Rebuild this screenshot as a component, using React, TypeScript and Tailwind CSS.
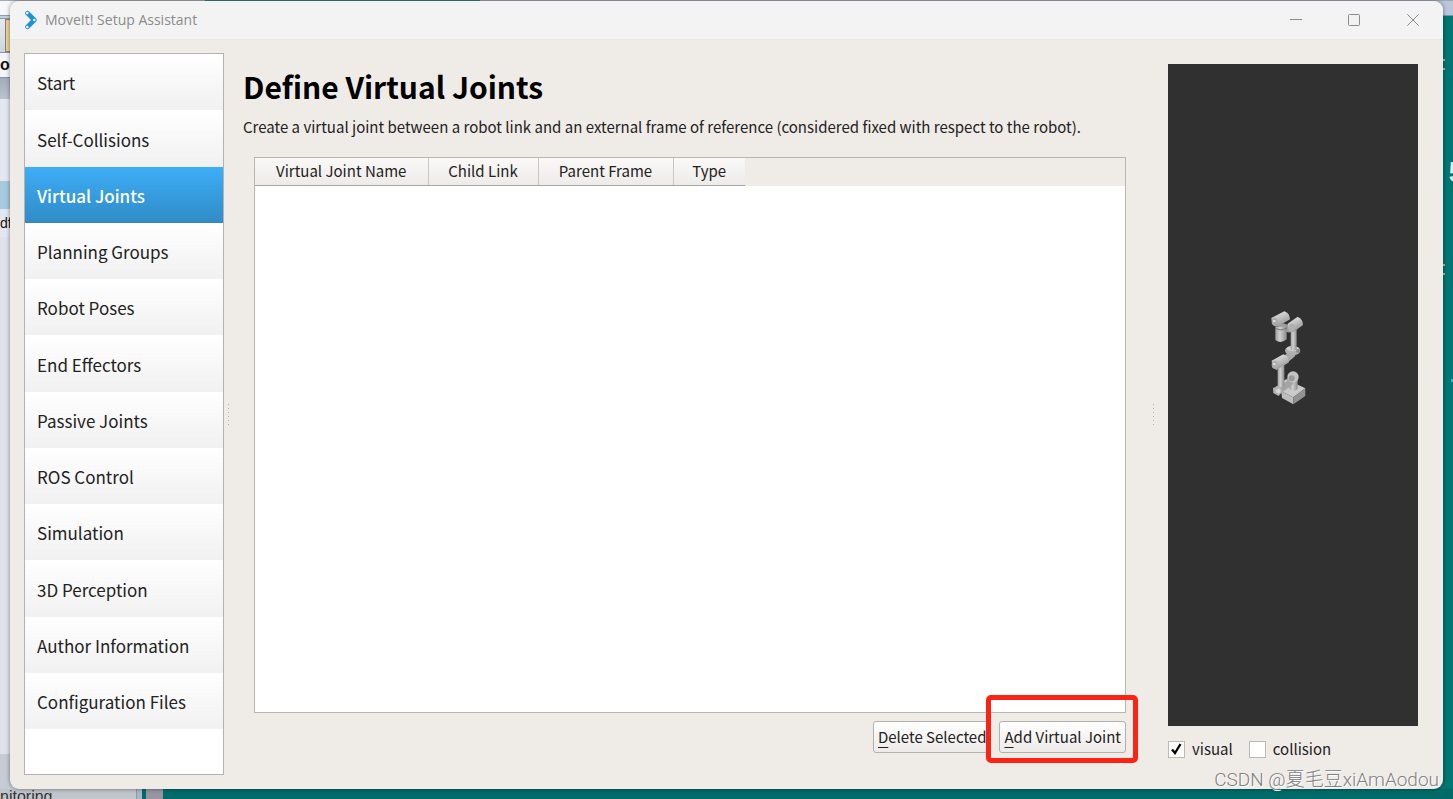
import { clsx } from 'clsx';

const STEPS = [
  'Start',
  'Self-Collisions',
  'Virtual Joints',
  'Planning Groups',
  'Robot Poses',
  'End Effectors',
  'Passive Joints',
  'ROS Control',
  'Simulation',
  '3D Perception',
  'Author Information',
  'Configuration Files',
];

const COLUMNS = [
  { label: 'Virtual Joint Name', width: 'w-[173px]' },
  { label: 'Child Link', width: 'w-[110px]' },
  { label: 'Parent Frame', width: 'w-[135px]' },
  { label: 'Type', width: 'w-[72px]' },
];

// Other windows that peek out around the dialog
function Desktop() {
  return (
    <div className="absolute inset-0 flex flex-col overflow-hidden bg-[#007672]" aria-hidden="true">
      <div className="flex h-px">
        <div className="w-[205px] bg-[#a5a6b0]" />
        <div className="w-[275px] bg-[#347f7d]" />
        <div className="flex-1 bg-[#a0a6b2]" />
      </div>
      <div className="flex min-h-0 flex-1 justify-between">
        <div className="flex w-10 flex-col whitespace-nowrap bg-[#e3e7f1] text-[#111]">
          <div className="h-[14px] bg-[#f7f8fa]" />
          <div className="h-[4px] border-y border-[#8c9db0] bg-[#c3d0de]" />
          <div className="flex h-[33px] bg-gradient-to-b from-[#e4eaf3] to-[#cbd5e3]">
            <div className="ml-[5px] w-8 border border-[#a07c4c] bg-[#e5d3a0]" />
          </div>
          <div className="flex h-[26px] items-center border-y border-[#8593a8] bg-[#f3f5f9] font-['Liberation_Sans'] text-base font-bold">
            o
          </div>
          <div className="h-[21px] bg-gradient-to-b from-[#a3adbb] to-[#bac3ce]" />
          <div className="h-[82px]" />
          <div className="h-[28px] bg-[#a7c9dd]" />
          <div className="h-[28px] pt-[2px] font-['Liberation_Sans'] text-sm leading-6">df</div>
          <div className="flex-1 bg-[#dfe1ec]" />
          <div className="h-[35px] bg-[#c5ccd5]" />
        </div>
        <div className="flex w-5 flex-col pl-[10px]">
          <div className="-ml-[10px] h-[15px] border-b border-[#7d93a5] bg-[#b9c6dc]" />
          <div className="mt-[43px] h-[11px] w-[2px] border-y-2 border-[#b9c0a4]" />
          <div className="mt-[88px] h-8 pl-[5px] font-['Liberation_Mono'] text-3xl leading-8 font-bold text-[#e4efe9]">
            5
          </div>
          <div className="mt-[74px] h-[11px] w-[2px] border-y-2 border-[#b9c0a4]" />
          <div className="mt-[104px] ml-[8px] h-[3px] bg-[#3ba8d8]" />
        </div>
      </div>
      <div className="flex h-[10px] bg-[#006b69]">
        <div className="w-[137px] overflow-hidden border-r border-[#8d99a6] bg-[#c0c5cc] font-['Liberation_Sans'] text-base leading-4 text-[#333]">
          nitoring
        </div>
        <div className="w-[5px] bg-[#a9b7c6]" />
        <div className="ml-[4px] w-[17px] bg-[#9795a1]" />
      </div>
    </div>
  );
}

function MoveItLogo() {
  return (
    <svg className="h-5 w-[14px]" viewBox="0 0 14 20" fill="none">
      <path d="M3.5 3.2 L10.3 10 L3.5 16.8" stroke="#1f93cf" strokeWidth="4.6" strokeLinejoin="round" strokeLinecap="round" />
      <circle cx="3.3" cy="3" r="1.2" fill="#fff" />
      <circle cx="10.3" cy="10" r="1.2" fill="#fff" />
      <circle cx="3.3" cy="17" r="1.2" fill="#fff" />
    </svg>
  );
}

function TitleBar() {
  return (
    <header className="flex h-[39px] shrink-0 items-center border-b border-[#e9e7e5] bg-[#f3f3f3] pl-[14px] text-[#8b8b8b]">
      <MoveItLogo />
      <span className="ml-[7px] flex-1 font-['Open_Sans',sans-serif] text-sm">MoveIt! Setup Assistant</span>
      <button type="button" aria-label="Minimize" className="flex h-full w-[58px] items-center justify-center">
        <svg className="size-3" viewBox="0 0 12 12" stroke="currentColor"><path d="M0 5.5H12" /></svg>
      </button>
      <button type="button" aria-label="Maximize" className="flex h-full w-[58px] items-center justify-center">
        <svg className="size-3" viewBox="0 0 12 12" fill="none" stroke="currentColor"><rect x="0.5" y="0.5" width="11" height="11" rx="1" /></svg>
      </button>
      <button type="button" aria-label="Close" className="flex h-full w-[60px] items-center justify-center">
        <svg className="size-3" viewBox="0 0 12 12" stroke="currentColor"><path d="M0.3 0.3L11.7 11.7M11.7 0.3L0.3 11.7" /></svg>
      </button>
    </header>
  );
}

function Sidebar() {
  return (
    <nav className="w-[200px] shrink-0 border border-[#b5b2af] bg-white">
      <ul className="grid h-[675px] grid-rows-12">
        {STEPS.map((step) => {
          const active = step === 'Virtual Joints';
          return (
            <li key={step} className="flex">
              <button
                type="button"
                className={clsx(
                  'flex-1 border-b pt-[3px] pl-3 text-left text-[17px]',
                  active
                    ? 'border-[#3b86b8] bg-gradient-to-b from-[#3daef8] to-[#308cc6] font-medium text-white'
                    : 'border-[#ebe9e6] bg-gradient-to-b from-white to-[#f1f1f1] text-[#222] last:border-[#f1f1f1]'
                )}
              >
                {step}
              </button>
            </li>
          );
        })}
      </ul>
    </nav>
  );
}

function SplitHandle() {
  return (
    <div className="flex w-[9px] shrink-0 flex-col items-center justify-center gap-[3px]">
      {[0, 1, 2, 3, 4, 5].map((dot) => (
        <span key={dot} className="size-px bg-[#b4b1ad]" />
      ))}
    </div>
  );
}

const pushButton =
  'h-8 rounded-[3px] border border-[#b3b0ad] bg-gradient-to-b from-white to-[#edebe8] px-1 text-[15px] text-[#222]';

function JointsPanel() {
  return (
    <main className="flex min-w-0 flex-1 flex-col pr-[23px] pl-[10px]">
      <h1 className="mt-[13px] text-3xl leading-10 font-bold text-black">Define Virtual Joints</h1>
      <p className="mt-[9px] text-[15px] leading-6">
        Create a virtual joint between a robot link and an external frame of reference (considered fixed with respect to the robot).
      </p>
      <div className="mt-[18px] ml-[11px] flex-1 border border-[#b9b6b3] bg-white">
        <div className="bg-[#efebe7]">
          <table className="table-fixed border-collapse" aria-label="Virtual joints">
            <thead>
              <tr className="h-[27px]">
                {COLUMNS.map((col) => (
                  <th
                    key={col.label}
                    className={clsx(
                      'border-b border-[#a9a6a3] bg-gradient-to-b from-[#fbf9f8] to-[#edebe9] p-0 text-[15px] leading-6 font-normal not-last:border-r not-last:border-r-[#c9c6c3]',
                      col.width
                    )}
                  >
                    {col.label}
                  </th>
                ))}
              </tr>
            </thead>
          </table>
        </div>
      </div>
      <div className="mt-2 mb-[22px] flex justify-end gap-2">
        <button type="button" className={pushButton}>
          <span className="underline underline-offset-4">D</span>elete Selected
        </button>
        <div className="relative">
          <button type="button" className={pushButton}>
            <span className="underline underline-offset-4">A</span>dd Virtual Joint
          </button>
          <div className="pointer-events-none absolute -top-[26px] -right-3 -bottom-[10px] -left-[13px] rounded-[5px] border-5 border-[#fd2314]" />
        </div>
      </div>
    </main>
  );
}

function RobotArm() {
  return (
    <svg className="h-[96px] w-[38px]" viewBox="60 30 114 288" strokeLinecap="round" aria-label="Robot arm">
      <defs>
        <linearGradient id="tube" x1="0" x2="1">
          <stop offset="0" stopColor="#a0a0a0" />
          <stop offset="0.4" stopColor="#d0d0d0" />
          <stop offset="1" stopColor="#8c8c8c" />
        </linearGradient>
        <linearGradient id="motor" x1="0" y1="0" x2="0.5" y2="1">
          <stop offset="0.2" stopColor="#dedede" />
          <stop offset="1" stopColor="#959595" />
        </linearGradient>
      </defs>
      {/* base */}
      <path d="M94 274 L130 248 L166 265 L130 292Z" fill="#cacaca" />
      <path d="M94 274 L130 292 V313 L96 294Z" fill="#bdbdbd" />
      <path d="M130 292 L166 265 V288 L130 313Z" fill="#929292" />
      <path d="M118 232 H143 V266 Q130 280 118 266Z" fill="url(#tube)" />
      <path d="M84 272 L118 246" stroke="#a4a4a4" strokeWidth="24" />
      <path d="M80 264 L108 242" stroke="#c6c6c6" strokeWidth="7" />
      <circle cx="129" cy="231" r="17" fill="#c4c4c4" />
      <circle cx="125" cy="235" r="9" fill="#9a9a9a" />
      <path d="M69 264 L85 258 L98 272 L86 288 L70 279Z" fill="#b4b4b4" />
      <circle cx="85" cy="273" r="7" fill="#d6d6d6" />
      {/* lower link */}
      <rect x="83" y="196" width="20" height="66" fill="url(#tube)" />
      <path d="M109 176 L124 164" stroke="#aaa" strokeWidth="22" />
      <path d="M65 182 L100 163 Q116 168 117 187 L80 210 Q66 205 65 182Z" fill="url(#motor)" />
      <ellipse cx="74" cy="194" rx="9" ry="12" fill="#acacac" />
      <circle cx="73" cy="192" r="4" fill="#ddd" />
      {/* upper link */}
      <ellipse cx="128" cy="152" rx="23" ry="14" fill="#b0b0b0" />
      <ellipse cx="128" cy="146" rx="18" ry="8" fill="#d0d0d0" />
      <rect x="122" y="85" width="18" height="66" fill="url(#tube)" />
      <circle cx="144" cy="153" r="6" fill="#8d8d8d" />
      {/* wrist */}
      <path d="M96 80 L116 86" stroke="#9c9c9c" strokeWidth="22" />
      <path d="M76 80 H110 V118 Q93 133 76 120Z" fill="url(#tube)" />
      <path d="M76 84 Q92 96 110 84" stroke="#777" strokeWidth="3" fill="none" />
      <path d="M64 54 L103 34 Q119 39 120 58 L81 81 Q65 77 64 54Z" fill="url(#motor)" />
      <ellipse cx="74" cy="65" rx="9" ry="12" fill="#a8a8a8" />
      <circle cx="73" cy="63" r="4" fill="#ddd" />
      <path d="M113 71 L143 50 Q159 57 159 75 L129 97 Q114 93 113 71Z" fill="url(#motor)" />
      <ellipse cx="124" cy="83" rx="9" ry="12" fill="#b0b0b0" />
    </svg>
  );
}

function CheckOption({ label, checked }: { label: string; checked?: boolean }) {
  return (
    <label className="relative flex items-center gap-[7px] text-[15px] leading-6">
      <input
        type="checkbox"
        defaultChecked={checked}
        className="peer size-[17px] appearance-none border border-[#bbb8b5] bg-white"
      />
      <svg className="absolute left-[3px] hidden size-3 peer-checked:block" viewBox="0 0 12 12" fill="none" stroke="#000">
        <path d="M1 6.5L4 10L9.5 1" strokeWidth="2.3" />
      </svg>
      {label}
    </label>
  );
}

function Preview() {
  return (
    <aside className="flex w-[260px] shrink-0 flex-col pt-[11px] pl-[10px]">
      <div className="flex flex-1 items-center justify-center bg-[#303030] pr-2 pb-[74px]">
        <RobotArm />
      </div>
      <div className="mt-[11px] mb-[14px] flex gap-4">
        <CheckOption label="visual" checked />
        <CheckOption label="collision" />
      </div>
    </aside>
  );
}

export default function App() {
  return (
    <div className="relative flex min-h-screen flex-col px-[10px] pt-px pb-[10px] font-['Noto_Sans_CJK_SC',sans-serif] text-[#222]">
      <Desktop />
      <div className="relative flex flex-1 flex-col overflow-hidden rounded-[9px] bg-[#efebe7] shadow-[0_0_4px_rgba(0,0,0,0.45)]">
        <TitleBar />
        <div className="flex flex-1 pt-[13px] pr-[25px] pb-[14px] pl-[14px]">
          <Sidebar />
          <SplitHandle />
          <JointsPanel />
          <SplitHandle />
          <Preview />
        </div>
      </div>
      <div className="absolute right-[14px] bottom-[5px] font-['Roboto','Noto_Sans_CJK_SC',sans-serif] text-[19px] leading-7 font-light text-[#808080] [text-shadow:1px_1px_0_#fff]">
        CSDN @夏毛豆xiAmAodou
      </div>
    </div>
  );
}
